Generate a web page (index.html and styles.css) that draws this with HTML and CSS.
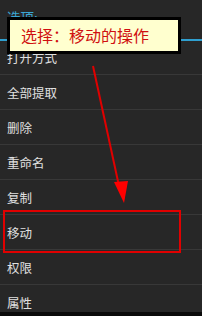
FILE: index.html
```html
<!DOCTYPE html>
<html lang="zh">
<head>
    <meta charset="UTF-8">
    <meta name="viewport" content="width=device-width, initial-scale=1.0">
    <title>选项</title>
    <link rel="stylesheet" href="styles.css">
</head>
<body>
    <div class="screen">
        <header class="dialog-header">
            <h1 class="dialog-title">选项:</h1>
        </header>

        <ul class="menu">
            <li class="menu-item">打开方式</li>
            <li class="menu-item">全部提取</li>
            <li class="menu-item">删除</li>
            <li class="menu-item">重命名</li>
            <li class="menu-item">复制</li>
            <li class="menu-item">移动</li>
            <li class="menu-item">权限</li>
            <li class="menu-item">属性</li>
        </ul>
        <div class="bottom-bar"></div>

        <div class="note">选择：移动的操作</div>
        <div class="highlight"></div>
        <svg class="arrow" width="202" height="316" viewBox="0 0 202 316">
            <line x1="93" y1="66" x2="119" y2="186" stroke="#e00000" stroke-width="2"/>
            <polygon points="114,182 128,181 124,203" fill="#ff0000"/>
        </svg>
    </div>
</body>
</html>
```

FILE: styles.css
```css
* {
    margin: 0;
    padding: 0;
    box-sizing: border-box;
}

body {
    font-family: "Noto Sans CJK SC", "Noto Sans", sans-serif;
    background: #000;
}

.screen {
    position: relative;
    width: 202px;
    height: 316px;
    background: #272727;
    overflow: hidden;
}

.dialog-header {
    height: 41px;
    padding: 9px 7px 0;
    border-bottom: 2px solid #2f9fcf;
}

.dialog-title {
    font-size: 13.5px;
    font-weight: normal;
    line-height: 16px;
    color: #3aa6d4;
}

.menu {
    list-style: none;
    height: 271px;
    overflow: hidden;
}

.menu-item {
    height: 35px;
    padding-left: 7px;
    border-bottom: 1px solid #383838;
    display: flex;
    align-items: center;
    font-size: 12.5px;
    color: #e0e0e0;
}

.menu-item:first-child {
    height: 34px;
}

.bottom-bar {
    height: 4px;
    background: #0a0a0a;
}

.note {
    position: absolute;
    left: 7px;
    top: 17px;
    width: 174px;
    height: 37px;
    padding-left: 11px;
    background: #ffffcf;
    border: 3px solid #000;
    color: #d01010;
    font-size: 16px;
    line-height: 31px;
}

.highlight {
    position: absolute;
    left: 3px;
    top: 210px;
    width: 178px;
    height: 43px;
    border: 2px solid #e00000;
}

.arrow {
    position: absolute;
    left: 0;
    top: 0;
}
```
